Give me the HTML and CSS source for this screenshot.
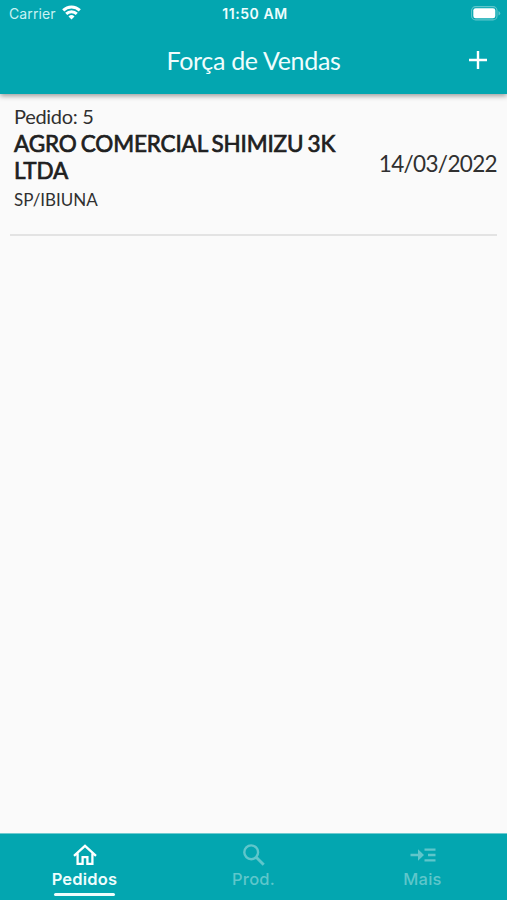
FILE: index.html
```html
<!DOCTYPE html>
<html lang="pt-BR">
<head>
<meta charset="utf-8">
<title>Força de Vendas</title>
<link rel="stylesheet" href="styles.css">
</head>
<body>
<header class="top">
  <div class="status">
    <div class="carrier"><span>Carrier</span>
      <svg width="19" height="15" viewBox="0 0 19 15" fill="none" stroke="#fff" stroke-width="2.9"><path d="M1.2 5.400a11.800 11.800 0 0 1 16.600 0M4.200 8.900a7.500 7.500 0 0 1 10.600 0"/><path d="M9.500 14.500 6.500 11.500a4.300 4.300 0 0 1 6 0z" fill="#fff" stroke="none"/></svg>
    </div>
    <time class="clock">11:50 AM</time>
    <svg class="battery" width="30" height="15" viewBox="0 0 30 15"><rect x=".6" y=".6" width="25.4" height="13.3" rx="4" fill="none" stroke="#5fc6cb" stroke-width="1.1"/><rect x="2.3" y="2.3" width="22" height="9.9" rx="2.3" fill="#fff"/><path d="M27.5 5v4.6q1.7-.7 1.7-2.3T27.5 5z" fill="#5fc6cb"/></svg>
  </div>
  <div class="appbar">
    <h1 class="title">Força de Vendas</h1>
    <svg class="add" width="18" height="18" viewBox="0 0 18 18" fill="none" stroke="#fff" stroke-width="2.4"><path d="M9 0v18M0 9h18"/></svg>
  </div>
</header>
<main class="orders">
  <article class="order">
    <div class="info">
      <div class="number">Pedido: 5</div>
      <h2 class="customer"><span class="line-one">AGRO COMERCIAL SHIMIZU 3K</span> <span class="line-two">LTDA</span></h2>
      <div class="city">SP/IBIUNA</div>
    </div>
    <time class="date">14/03/2022</time>
  </article>
</main>
<nav class="tabs">
  <a class="tab active">
    <svg width="26" height="24" viewBox="0 0 26 24" fill="none" stroke="#fff" stroke-width="2.3"><path d="M2 12.800 13 2.900 24 12.800M5.600 10.500v10.300h5v-6.600h4.800v6.600h5V10.500"/></svg>
    <span class="label">Pedidos</span>
  </a>
  <a class="tab">
    <svg width="26" height="24" viewBox="0 0 26 24" fill="none" stroke="#5fc6cb" stroke-width="2.4"><circle cx="10.200" cy="9.300" r="6.900"/><path d="m15.200 14.200 7.500 7.500" stroke-width="2.900"/></svg>
    <span class="label">Prod.</span>
  </a>
  <a class="tab">
    <svg width="26" height="24" viewBox="0 0 26 24" fill="none" stroke="#5fc6cb" stroke-width="2.400"><path d="M.5 12h9M14.500 6.600h11M18 12h7.500M14.500 17.400h11"/><path d="m8 6.200 6 5.800-6 5.800z" fill="#5fc6cb" stroke="none"/></svg>
    <span class="label">Mais</span>
  </a>
</nav>
</body>
</html>
```
FILE: styles.css
```css
* { box-sizing: border-box; }
body {
  margin: 0;
  height: 900px;
  display: flex;
  flex-direction: column;
  overflow: hidden;
  background: #fafafa;
  color: #303030;
  font-family: Lato, sans-serif;
}
.top {
  height: 94px;
  flex: none;
  background: #03a6b0;
  color: #effdfd;
  box-shadow: 0 2px 5px rgba(0, 0, 0, .38);
}
.status {
  height: 28px;
  padding: 0 6px 0 9px;
  display: grid;
  grid-template-columns: 1fr auto 1fr;
  align-items: center;
  font: 14px/28px Inter, sans-serif;
}
.carrier { display: flex; align-items: center; gap: 6px; color: #c9f2f3; }
.carrier span { letter-spacing: .1px; }
.carrier svg { margin-top: -3px; }
.clock { font-size: 14px; font-weight: 600; letter-spacing: .55px; }
.battery { justify-self: end; margin-top: -1px; }
.appbar {
  height: 66px;
  padding: 0 20px;
  display: grid;
  grid-template-columns: 1fr auto 1fr;
  align-items: center;
}
.title { grid-column: 2; margin: -2px 0 0; font-size: 25px; font-weight: 400; line-height: 30px; letter-spacing: -.3px; }
.add { justify-self: end; margin-top: -3px; }
.orders { flex: 1; padding: 0 10px; }
.order {
  height: 142px;
  padding: 9px 0 0 4px;
  display: flex;
  justify-content: space-between;
  border-bottom: 2px solid #e3e3e3;
}
.number { font-size: 20px; line-height: 26px; letter-spacing: -.3px; }
.customer {
  margin: 1px 0 0;
  font-size: 22.5px;
  font-weight: 400;
  line-height: 27px;
  letter-spacing: -.15px;
  word-spacing: -1.5px;
  color: #202020;
  -webkit-text-stroke: .7px #202020;
}
.customer span { display: block; width: max-content; }
.city { margin-top: 3px; font-size: 17px; line-height: 26px; }
.date { margin-top: 47px; font-size: 22.5px; line-height: 28px; letter-spacing: -.65px; }
.tabs {
  height: 67px;
  flex: none;
  display: grid;
  grid-template-columns: repeat(3, 1fr);
  background: #03a6b0;
  border-top: 1px solid #70cbd0;
  color: #5fc6cb;
}
.tab { display: flex; flex-direction: column; align-items: center; padding-top: 9px; }
.label { font: 500 16.5px/24px Inter, sans-serif; letter-spacing: .2px; }
.active { color: #effdfd; }
.active .label { font-weight: 600; }
.active::after { content: ""; width: 61px; height: 3px; margin-top: 2px; border-radius: 2px; background: #effdfd; }
```
